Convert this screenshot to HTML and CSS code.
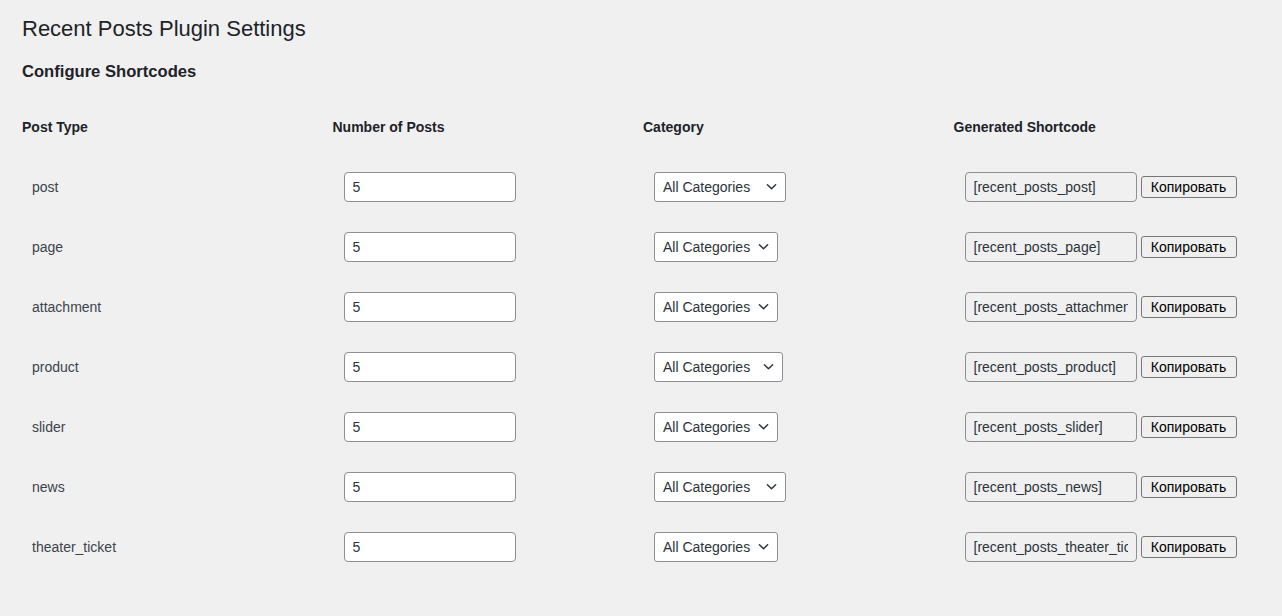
FILE: index.html
```html
<!DOCTYPE html>
<html lang="en">
<head>
<meta charset="utf-8">
<title>Recent Posts Plugin Settings</title>
<link rel="stylesheet" href="styles.css">
</head>
<body>
<div class="wrap">
  <h1 class="title">Recent Posts Plugin Settings</h1>
  <h2 class="subtitle">Configure Shortcodes</h2>
  <table class="settings">
    <thead>
      <tr>
        <th>Post Type</th>
        <th>Number of Posts</th>
        <th>Category</th>
        <th>Generated Shortcode</th>
      </tr>
    </thead>
    <tbody>
      <tr>
        <td>post</td>
        <td><input class="num" type="text" value="5"></td>
        <td><span class="sel w132"><select><option>All Categories</option></select><svg class="chev" viewBox="0 0 12 8"><path d="M1.5 1.5 6 6l4.5-4.5"/></svg></span></td>
        <td><input class="code" type="text" readonly value="[recent_posts_post]"><button class="copy" type="button">Копировать</button></td>
      </tr>
      <tr>
        <td>page</td>
        <td><input class="num" type="text" value="5"></td>
        <td><span class="sel w124"><select><option>All Categories</option></select><svg class="chev" viewBox="0 0 12 8"><path d="M1.5 1.5 6 6l4.5-4.5"/></svg></span></td>
        <td><input class="code" type="text" readonly value="[recent_posts_page]"><button class="copy" type="button">Копировать</button></td>
      </tr>
      <tr>
        <td>attachment</td>
        <td><input class="num" type="text" value="5"></td>
        <td><span class="sel w124"><select><option>All Categories</option></select><svg class="chev" viewBox="0 0 12 8"><path d="M1.5 1.5 6 6l4.5-4.5"/></svg></span></td>
        <td><input class="code" type="text" readonly value="[recent_posts_attachment]"><button class="copy" type="button">Копировать</button></td>
      </tr>
      <tr>
        <td>product</td>
        <td><input class="num" type="text" value="5"></td>
        <td><span class="sel w129"><select><option>All Categories</option></select><svg class="chev" viewBox="0 0 12 8"><path d="M1.5 1.5 6 6l4.5-4.5"/></svg></span></td>
        <td><input class="code" type="text" readonly value="[recent_posts_product]"><button class="copy" type="button">Копировать</button></td>
      </tr>
      <tr>
        <td>slider</td>
        <td><input class="num" type="text" value="5"></td>
        <td><span class="sel w124"><select><option>All Categories</option></select><svg class="chev" viewBox="0 0 12 8"><path d="M1.5 1.5 6 6l4.5-4.5"/></svg></span></td>
        <td><input class="code" type="text" readonly value="[recent_posts_slider]"><button class="copy" type="button">Копировать</button></td>
      </tr>
      <tr>
        <td>news</td>
        <td><input class="num" type="text" value="5"></td>
        <td><span class="sel w132"><select><option>All Categories</option></select><svg class="chev" viewBox="0 0 12 8"><path d="M1.5 1.5 6 6l4.5-4.5"/></svg></span></td>
        <td><input class="code" type="text" readonly value="[recent_posts_news]"><button class="copy" type="button">Копировать</button></td>
      </tr>
      <tr>
        <td>theater_ticket</td>
        <td><input class="num" type="text" value="5"></td>
        <td><span class="sel w124"><select><option>All Categories</option></select><svg class="chev" viewBox="0 0 12 8"><path d="M1.5 1.5 6 6l4.5-4.5"/></svg></span></td>
        <td><input class="code" type="text" readonly value="[recent_posts_theater_ticket]"><button class="copy" type="button">Копировать</button></td>
      </tr>
    </tbody>
  </table>
</div>
</body>
</html>
```
FILE: styles.css
```css
html, body {
  margin: 0;
  padding: 0;
  background: #f0f0f1;
}
body {
  font-family: "Liberation Sans", Arial, sans-serif;
  font-size: 14px;
  color: #3c434a;
}
.wrap {
  padding: 14px 20px 0 22px;
}
.title {
  margin: 0;
  font-size: 22px;
  font-weight: 400;
  line-height: 29px;
  color: #1d2327;
}
.subtitle {
  margin: 18px 0 0;
  font-size: 16.6px;
  font-weight: 700;
  line-height: 22px;
  color: #1d2327;
}
.settings {
  margin-top: 14px;
  width: 1242px;
  table-layout: fixed;
  border-collapse: collapse;
}
.settings th {
  text-align: left;
  padding: 20px 0;
  line-height: 20px;
  font-size: 14px;
  font-weight: 700;
  color: #1d2327;
}
.settings td {
  padding: 0 10px;
  height: 60px;
  vertical-align: middle;
  line-height: 20px;
  color: #3c434a;
}
.num, .code {
  box-sizing: border-box;
  width: 172px;
  height: 30px;
  margin: 0 0 0 1px;
  padding: 0 8px;
  font-family: "Liberation Sans", Arial, sans-serif;
  font-size: 14px;
  color: #2c3338;
  border: 1px solid #8c8f94;
  border-radius: 4px;
  background: #fff;
  vertical-align: middle;
  outline: none;
}
.code {
  background: #f0f0f1;
  border-color: #8c8f94;
  color: #2c3338;
}
.sel {
  position: relative;
  display: inline-block;
  vertical-align: middle;
  margin-left: 1px;
}
.sel select {
  -webkit-appearance: none;
  appearance: none;
  box-sizing: border-box;
  width: 100%;
  height: 30px;
  margin: 0;
  padding: 0 24px 0 8px;
  font-family: "Liberation Sans", Arial, sans-serif;
  font-size: 14px;
  color: #2c3338;
  background: #fff;
  border: 1px solid #8c8f94;
  border-radius: 3px;
  display: block;
}
.w132 { width: 132px; }
.w124 { width: 124px; }
.w129 { width: 129px; }
.chev {
  position: absolute;
  right: 9px;
  top: 11px;
  width: 11px;
  height: 8px;
  pointer-events: none;
  fill: none;
  stroke: #2c3338;
  stroke-width: 1.6;
  stroke-linecap: round;
  stroke-linejoin: round;
}
.copy {
  box-sizing: border-box;
  height: 22px;
  width: 96px;
  margin-left: 4px;
  padding: 0;
  font-family: "Liberation Sans", Arial, sans-serif;
  font-size: 14px;
  color: #000;
  background: #efefef;
  border: 1px solid #767676;
  border-radius: 3px;
  vertical-align: middle;
}
```
